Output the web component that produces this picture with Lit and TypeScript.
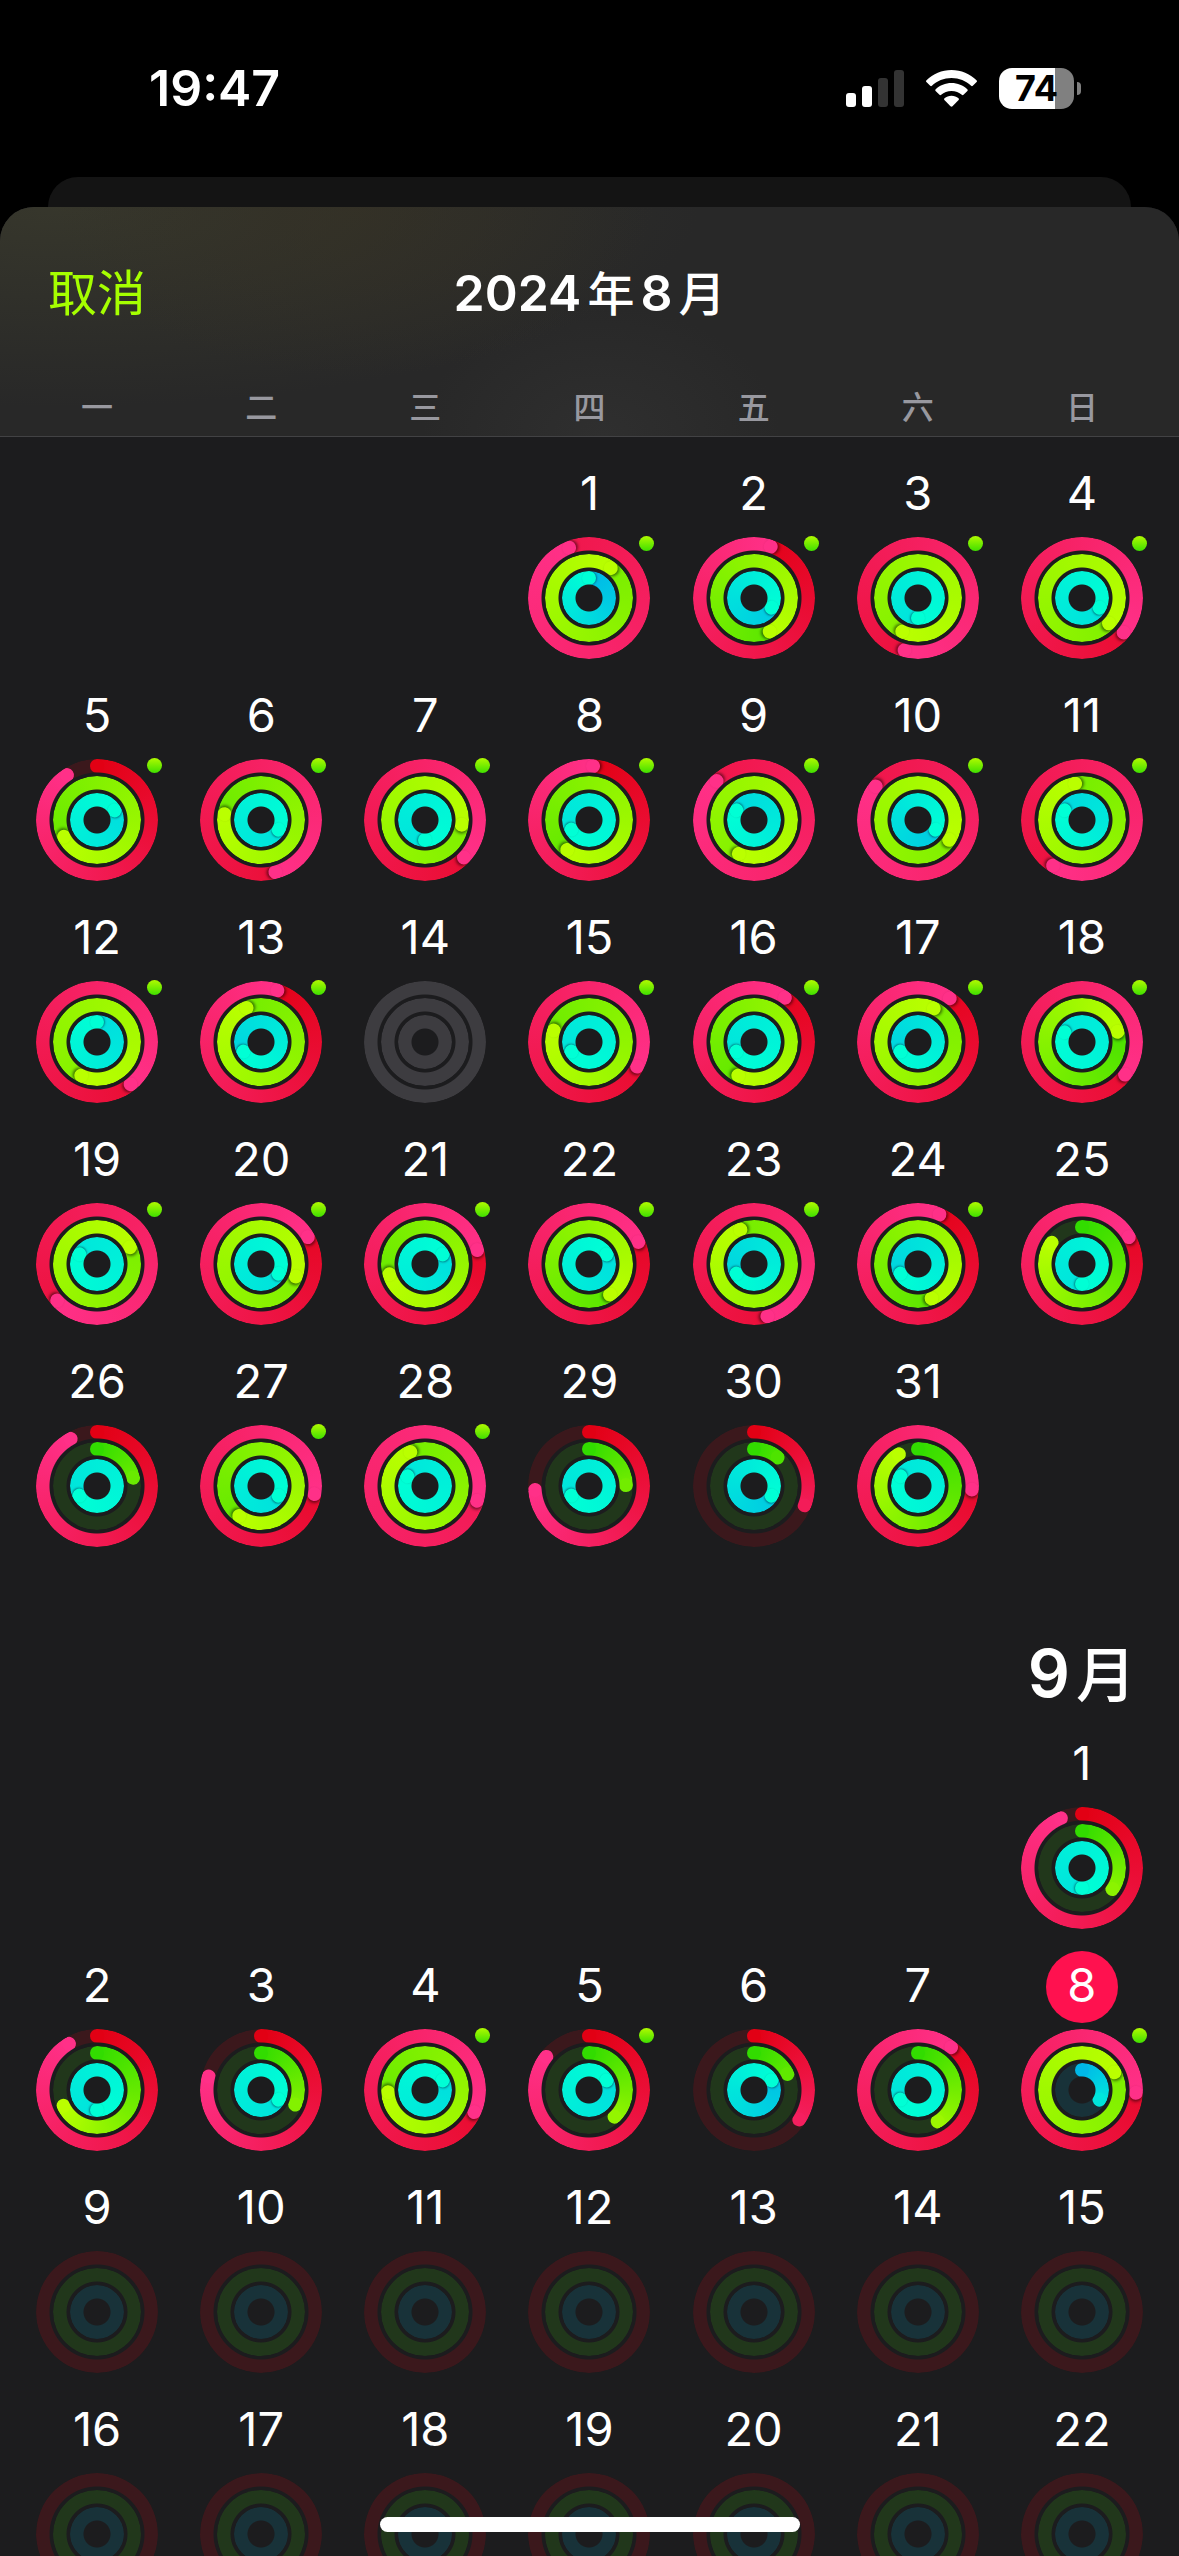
import { LitElement, html, css, svg, nothing } from "lit";
import { customElement, property } from "lit/decorators.js";
import { classMap } from "lit/directives/class-map.js";
import { styleMap } from "lit/directives/style-map.js";

type RGB = [number, number, number];

/** Turns completed on each ring: move, exercise, stand. 1 is one full turn. */
type Turns = [number, number, number];

interface Day {
  date: number;
  /** null: nothing was recorded that day */
  turns: Turns | null;
  workout?: boolean;
  today?: boolean;
}

interface Palette {
  name: string;
  start: RGB;
  end: RGB;
  track: string;
}

const PALETTES: Palette[] = [
  { name: "move", start: [226, 0, 20], end: [255, 48, 136], track: "#3b181c" },
  { name: "exercise", start: [50, 220, 0], end: [186, 255, 0], track: "#21371b" },
  { name: "stand", start: [0, 184, 232], end: [0, 255, 213], track: "#183239" },
];

const mix = (p: Palette, t: number) =>
  `rgb(${p.start.map((v, i) => Math.round(v + (p.end[i] - v) * t)).join(" ")})`;

const day = (date: number, turns: Turns | null, workout = true, today = false): Day => ({
  date,
  turns,
  workout,
  today,
});

const AUGUST: Day[] = [
  day(1, [1.94, 2.1, 1]),
  day(2, [1.05, 1.43, 1.33]),
  day(3, [1.54, 2.57, 2.5]),
  day(4, [1.36, 2.37, 2.33]),
  day(5, [0.906, 1.675, 2.17]),
  day(6, [1.457, 1.775, 2.33]),
  day(7, [1.372, 2.27, 2.5]),
  day(8, [1.012, 1.6, 2.67]),
  day(9, [1.878, 2.567, 1.83]),
  day(10, [1.857, 2.34, 1.33]),
  day(11, [1.59, 1.97, 1.83]),
  day(12, [1.393, 2.57, 2]),
  day(13, [1.049, 1.936, 1.67]),
  day(14, null, false),
  day(15, [1.325, 1.8, 2.67]),
  day(16, [1.097, 1.57, 2.67]),
  day(17, [1.1, 2.07, 1.67]),
  day(18, [1.353, 1.205, 2.83]),
  day(19, [1.632, 2.175, 2.83]),
  day(20, [1.167, 2.305, 2.33]),
  day(21, [1.208, 1.705, 2.17]),
  day(22, [1.183, 1.404, 2.17]),
  day(23, [1.46, 1.94, 1.67]),
  day(24, [1.065, 1.44, 1.67]),
  day(25, [1.167, 0.847, 2.5], false),
  day(26, [0.919, 0.214, 2.67], false),
  day(27, [1.274, 1.6, 2.33]),
  day(28, [2.294, 1.935, 2.83]),
  day(29, [0.738, 0.246, 2.67], false),
  day(30, [0.308, 0.11, 1.33], false),
  day(31, [1.26, 0.914, 2.83], false),
];

const SEPTEMBER: Day[] = [
  day(1, [0.936, 0.346, 2.5], false),
  day(2, [0.913, 0.68, 2.5], false),
  day(3, [0.79, 0.314, 2.33], false),
  day(4, [1.317, 1.74, 2.17]),
  day(5, [0.855, 0.379, 2.17]),
  day(6, [0.342, 0.179, 1.17], false),
  day(7, [1.105, 0.411, 2.67], false),
  day(8, [1.258, 2.17, 0.33], true, true),
  ...Array.from({ length: 14 }, (_, i) => day(i + 9, [0, 0, 0], false)),
];

const WEEKDAYS = ["一", "二", "三", "四", "五", "六", "日"];

@customElement("activity-rings")
export class ActivityRings extends LitElement {
  @property({ attribute: false }) turns: Turns | null = null;

  static styles = css`
    :host {
      display: grid;
      place-items: center;
      width: 122px;
      height: 122px;
    }
    .ring {
      grid-area: 1 / 1;
      position: relative;
      border-radius: 50%;
      overflow: hidden;
      background: var(--fill);
      -webkit-mask: radial-gradient(closest-side, transparent calc(100% - 14px), #000 calc(100% - 13px));
      mask: radial-gradient(closest-side, transparent calc(100% - 14px), #000 calc(100% - 13px));
    }
    .move {
      width: 122px;
      height: 122px;
    }
    .exercise {
      width: 88px;
      height: 88px;
    }
    .stand {
      width: 54px;
      height: 54px;
    }
    .arm {
      position: absolute;
      inset: 0;
      display: flex;
      justify-content: center;
      align-items: flex-start;
      transform: rotate(var(--angle));
    }
    .cap {
      width: 14px;
      height: 14px;
      border-radius: 50%;
      background: var(--color);
    }
    .lapped {
      box-shadow: 2px 0 3px rgba(0, 0, 0, 0.5);
    }
    .stand .lapped {
      box-shadow: 1px 0 2px rgba(0, 40, 60, 0.5);
    }
  `;

  private arm(turn: number, color: string, lapped = false) {
    return html`<div class="arm" style=${styleMap({ "--angle": `${(turn * 360).toFixed(1)}deg`, "--color": color })}>
      <div class=${classMap({ cap: true, lapped })}></div>
    </div>`;
  }

  private ring(p: Palette, length: number | null) {
    if (length === null || length === 0) {
      const fill = length === null ? "#3d3c40" : p.track;
      return html`<div class="ring ${p.name}" style=${styleMap({ "--fill": fill })}></div>`;
    }
    const full = length >= 1;
    const reach = full ? 1 : Math.min(1, length * 1.9);
    const end = mix(p, reach);
    const fill = full
      ? `conic-gradient(from ${(length * 360).toFixed(1)}deg, ${mix(p, (length - 1) / length)}, ${end})`
      : `conic-gradient(${mix(p, 0)}, ${end} ${(length * 360).toFixed(1)}deg, ${p.track} 0)`;
    return html`<div class="ring ${p.name}" style=${styleMap({ "--fill": fill })}>
      ${full ? nothing : this.arm(0, mix(p, 0))} ${this.arm(length, end, full)}
    </div>`;
  }

  render() {
    return PALETTES.map((p, i) => this.ring(p, this.turns ? this.turns[i] : null));
  }
}

@customElement("month-grid")
export class MonthGrid extends LitElement {
  @property({ attribute: false }) days: Day[] = [];
  @property({ type: Number }) offset = 0;

  static styles = css`
    :host {
      display: block;
    }
    .grid {
      display: grid;
      grid-template-columns: repeat(7, 1fr);
      margin: 0;
      padding: 0;
      list-style: none;
    }
    .lead {
      grid-column: span var(--span);
    }
    .day {
      display: flex;
      flex-direction: column;
      align-items: center;
      gap: 6px;
      width: 100%;
      margin: 0;
      padding: 22px 0 0;
      border: 0;
      background: none;
      color: #fff;
      font: inherit;
      font-size: 47px;
      cursor: pointer;
    }
    .number {
      box-sizing: border-box;
      width: 72px;
      height: 72px;
      padding-bottom: 4px;
      border-radius: 50%;
      line-height: 68px;
      text-align: center;
    }
    .today {
      background: #ff114f;
    }
    .figure {
      position: relative;
    }
    .dot {
      position: absolute;
      top: -1px;
      right: -4px;
      width: 15px;
      height: 15px;
      border-radius: 50%;
      background: linear-gradient(#b0fa00, #3fdf00);
    }
  `;

  render() {
    return html`<ul class="grid">
      ${this.offset ? html`<li class="lead" style=${styleMap({ "--span": String(this.offset) })} aria-hidden="true"></li>` : nothing}
      ${this.days.map(
        (d) => html`<li>
          <button class="day" type="button">
            <span class=${classMap({ number: true, today: !!d.today })}>${d.date}</span>
            <span class="figure">
              <activity-rings .turns=${d.turns}></activity-rings>
              ${d.workout ? html`<span class="dot"></span>` : nothing}
            </span>
          </button>
        </li>`,
      )}
    </ul>`;
  }
}

const signalIcon = svg`<svg class="signal" viewBox="0 0 58 37" aria-hidden="true">
  <rect x="0" y="23" width="10" height="14" rx="3" fill="#fff" />
  <rect x="16" y="16" width="10" height="21" rx="3" fill="#fff" />
  <rect x="32" y="8" width="10" height="29" rx="3" fill="#333" />
  <rect x="48" y="0" width="10" height="37" rx="3" fill="#333" />
</svg>`;

const wifiIcon = svg`<svg class="wifi" viewBox="0 0 51 37" aria-hidden="true" fill="#fff">
  <path d="M25.500 0C35.200 0 44 3.900 50.500 10.200C51.100 10.800 51.100 11.400 50.600 11.900L46.800 15.800C46.300 16.300 45.600 16.300 45.100 15.800C40 11 33.100 8 25.500 8C17.900 8 11 11 5.900 15.800C5.400 16.300 4.700 16.300 4.200 15.800L.4 11.900C-.1 11.400-.1 10.800.5 10.200C7 3.900 15.800 0 25.500 0Z" />
  <path d="M25.500 13C31.600 13 37.100 15.300 41.300 19.200C41.900 19.800 41.900 20.400 41.400 20.900L37.500 24.800C37 25.300 36.400 25.300 35.800 24.800C33.100 22.400 29.500 20.900 25.500 20.900C21.500 20.900 17.900 22.400 15.200 24.800C14.600 25.300 14 25.300 13.500 24.800L9.600 20.900C9.100 20.400 9.100 19.800 9.700 19.200C13.900 15.300 19.400 13 25.500 13Z" />
  <path d="M25.500 25.800C28.300 25.800 30.600 26.700 32.500 28.200C33.100 28.700 33.100 29.300 32.600 29.900L26.500 36.300C25.900 36.900 25.100 36.900 24.500 36.300L18.400 29.900C17.900 29.300 17.900 28.700 18.500 28.200C20.400 26.700 22.700 25.800 25.500 25.800Z" />
</svg>`;

@customElement("app-root")
export class AppRoot extends LitElement {
  static styles = css`
    :host {
      display: block;
      background: #000;
      color: #fff;
      font-family: Inter, "Noto Sans CJK SC", sans-serif;
    }
    .screen {
      position: relative;
      display: flex;
      flex-direction: column;
      height: 100vh;
      overflow: hidden;
    }
    .status {
      display: flex;
      flex: none;
      justify-content: space-between;
      align-items: center;
      padding: 58px 98px 59px 149px;
    }
    .time {
      font-size: 50px;
      font-weight: 600;
      line-height: 60px;
    }
    .indicators {
      display: flex;
      align-items: center;
      gap: 22px;
    }
    .signal {
      width: 58px;
      height: 37px;
    }
    .wifi {
      width: 51px;
      height: 37px;
    }
    .battery {
      display: flex;
      align-items: center;
      gap: 3px;
    }
    .level {
      width: 75px;
      height: 41px;
      border-radius: 13px;
      background: linear-gradient(90deg, #fff 75%, #808080 0);
      color: #000;
      font-size: 36px;
      font-weight: 700;
      line-height: 41px;
      text-align: center;
    }
    .nub {
      width: 4px;
      height: 13px;
      border-radius: 0 4px 4px 0;
      background: #808080;
    }
    .behind {
      flex: none;
      height: 30px;
      margin: 0 48px;
      border-radius: 30px 30px 0 0;
      background: #141414;
    }
    .sheet {
      display: flex;
      flex-direction: column;
      flex: 1;
      min-height: 0;
      border-radius: 34px 34px 0 0;
      overflow: hidden;
      background: #1c1c1e;
    }
    .header {
      flex: none;
      display: flex;
      flex-direction: column;
      gap: 65px;
      padding: 56px 0 8px;
      border-bottom: 1px solid #424244;
      background:
        radial-gradient(ellipse 300px 170px at 30% 0, rgba(56, 50, 34, 0.45), transparent),
        radial-gradient(ellipse 640px 200px at 5% 0, rgba(56, 56, 44, 0.9), transparent),
        radial-gradient(ellipse 180px 130px at 51% 100%, #2f2f2f, transparent),
        #282828;
    }
    .bar {
      display: grid;
      grid-template-columns: 1fr auto 1fr;
      align-items: center;
      padding: 0 48px;
      height: 60px;
    }
    .cancel {
      justify-self: start;
      margin: 0;
      padding: 0;
      border: 0;
      background: none;
      color: #a6ff00;
      font: inherit;
      font-size: 49px;
      line-height: 60px;
      cursor: pointer;
    }
    .title,
    .month {
      display: flex;
      justify-content: center;
      align-items: baseline;
      margin: 0;
      font-weight: 600;
      white-space: nowrap;
    }
    .title {
      gap: 6px;
      font-size: 50px;
      line-height: 60px;
    }
    .unit {
      font-weight: 500;
    }
    .title .unit {
      font-size: 47px;
    }
    .month .unit {
      font-size: 60px;
    }
    .weekdays {
      display: grid;
      grid-template-columns: repeat(7, 1fr);
      padding: 0 15px;
      color: #98989f;
      font-size: 32px;
      font-weight: 500;
      line-height: 40px;
      text-align: center;
    }
    .months {
      flex: 1;
      min-height: 0;
      padding: 0 15px;
      overflow: hidden;
    }
    .heading {
      display: grid;
      grid-template-columns: repeat(7, 1fr);
      padding-top: 92px;
    }
    .month {
      grid-column: 7;
      gap: 6px;
      font-size: 66px;
      height: 68px;
      line-height: 68px;
    }
    .home {
      position: absolute;
      bottom: 24px;
      left: 50%;
      width: 420px;
      height: 15px;
      border-radius: 8px;
      background: #fff;
      transform: translateX(-50%);
    }
  `;

  render() {
    return html`<div class="screen">
      <div class="status">
        <span class="time">19:47</span>
        <div class="indicators">
          ${signalIcon}${wifiIcon}
          <div class="battery"><span class="level">74</span><span class="nub"></span></div>
        </div>
      </div>
      <div class="behind"></div>
      <section class="sheet">
        <header class="header">
          <div class="bar">
            <button class="cancel" type="button">取消</button>
            <h1 class="title">
              <span>2024</span><span class="unit">年</span><span>8</span><span class="unit">月</span>
            </h1>
          </div>
          <div class="weekdays">${WEEKDAYS.map((d) => html`<span>${d}</span>`)}</div>
        </header>
        <main class="months">
          <month-grid .days=${AUGUST} .offset=${3}></month-grid>
          <div class="heading"><h2 class="month"><span>9</span><span class="unit">月</span></h2></div>
          <month-grid .days=${SEPTEMBER} .offset=${6}></month-grid>
        </main>
      </section>
      <div class="home"></div>
    </div>`;
  }
}
